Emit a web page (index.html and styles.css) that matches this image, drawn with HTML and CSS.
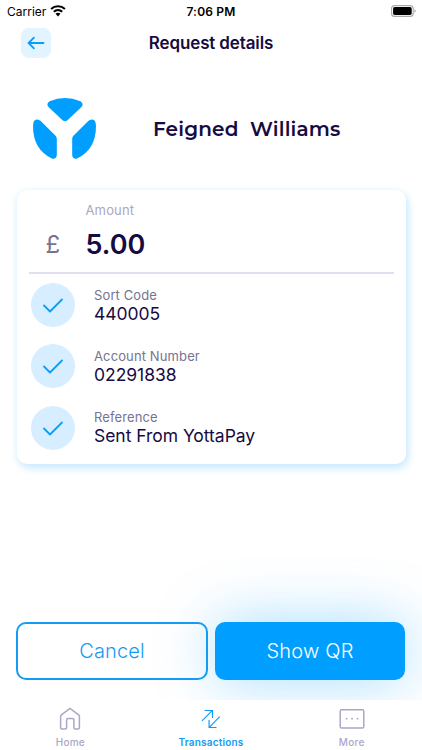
FILE: index.html
```html
<!DOCTYPE html>
<html lang="en">
<head>
<meta charset="utf-8">
<title>Request details</title>
<link rel="stylesheet" href="styles.css">
</head>
<body>
<div class="screen">
  <div class="status">
    <div class="carrier"><span class="t carrier-text">Carrier</span>
      <svg width="16" height="12" viewBox="0 0 16 12"><path d="M8 11.4 5.5 8.8a3.7 3.7 0 0 1 5 0Z"/><path d="M3.8 6.8a6.2 6.2 0 0 1 8.4 0M1.1 4a10 10 0 0 1 13.8 0" fill="none" stroke="#000" stroke-width="2.1"/></svg>
    </div>
    <span class="t clock">7:06 PM</span>
    <svg class="battery" width="25" height="12" viewBox="0 0 25 12"><rect x=".6" y=".6" width="21.6" height="10.8" rx="3" fill="#fff" stroke="#aaa" stroke-width="1.1"/><rect x="2.1" y="2.1" width="18.6" height="7.8" rx="1.6"/><path d="M23.5 4.3v3.4q1.2-.5 1.2-1.7t-1.2-1.7" fill="#999"/></svg>
  </div>
  <header class="header">
    <button class="back" aria-label="Back"><svg width="30" height="30" viewBox="0 0 30 30"><path d="M22.5 15h-15M12.9 9.7 7.6 15l5.3 5.3"/></svg></button>
    <h1 class="t title">Request details</h1>
  </header>
  <section class="payee">
    <svg class="logo" width="64" height="62" viewBox="0 0 64 62"><path d="M16.6 3.2Q32-3.1 47.4 3.2 51.5 5.9 48 9.6L35.500 21.300Q32 25 28.500 21.300L16 9.600Q12.500 5.900 16.600 3.200Z"/><path d="M7.500 22.800 22.800 38Q23.800 39 23.800 41V57Q23.300 61.500 18.900 60.500 0 51.500 0 28 .2 18.500 7.500 22.800Z"/><path d="M55.500 22.800 40.200 38Q39.200 39 39.200 41V57Q39.700 61.500 44.100 60.500 63 51.500 63 28 62.800 18.500 55.500 22.800Z"/></svg>
    <h2 class="t name">Feigned&nbsp; Williams</h2>
  </section>
  <section class="card">
    <div class="amount">
      <span class="t pound">£</span>
      <div class="amount-copy"><span class="t amount-label">Amount</span><strong class="t value">5.00</strong></div>
    </div>
    <div class="row"><span class="check"><svg width="44" height="44" viewBox="0 0 44 44"><path d="m13 22.500 6 6L31 16.500"/></svg></span><div class="copy"><span class="t label">Sort Code</span><span class="t data">440005</span></div></div>
    <div class="row"><span class="check"><svg width="44" height="44" viewBox="0 0 44 44"><path d="m13 22.500 6 6L31 16.500"/></svg></span><div class="copy"><span class="t label">Account Number</span><span class="t data">02291838</span></div></div>
    <div class="row"><span class="check"><svg width="44" height="44" viewBox="0 0 44 44"><path d="m13 22.500 6 6L31 16.500"/></svg></span><div class="copy"><span class="t label">Reference</span><span class="t data">Sent From YottaPay</span></div></div>
  </section>
  <div class="actions"><button class="cancel">Cancel</button><button class="show">Show QR</button></div>
  <nav class="tabs">
    <div class="tab"><svg width="24" height="24" viewBox="0 0 24 24"><path d="M2.600 9.400Q2.600 8.500 3.400 7.900L12 1.500l8.600 6.400q.8.600.8 1.500V20.500q0 1.500-1.500 1.500h-2.500q-1.500 0-1.500-1.500v-7.500q0-1.500-1.500-1.500H10.100q-1.500 0-1.500 1.500v7.500q0 1.500-1.500 1.500h-3q-1.500 0-1.500-1.500Z"/></svg><span>Home</span></div>
    <div class="tab active"><svg width="24" height="24" viewBox="0 0 24 24"><path d="M3 13.800 13.200 3.600M5.500 3.500h8v7.500M20.700 9.700 10.300 20.300M17.500 20.500H10.100v-7.500"/></svg><span>Transactions</span></div>
    <div class="tab more"><svg width="26" height="24" viewBox="0 0 26 24"><rect x="1.200" y="2.700" width="23.600" height="18.200" rx="1.500"/><path class="dots" d="M7.500 11.700h.1M13 11.700h.1M18.500 11.700h.1"/></svg><span>More</span></div>
  </nav>
</div>
</body>
</html>
```
FILE: styles.css
```css
* { box-sizing: border-box; }
body { margin: 0; background: #fff; font-family: Inter, "Liberation Sans", sans-serif; color: #160b42; }
button { font: inherit; padding: 0; border: 0; }
h1, h2 { margin: 0; }
svg { display: block; flex-shrink: 0; }
.t { white-space: nowrap; }
.screen { width: 422px; height: 750px; display: flex; flex-direction: column; overflow: hidden; background: #fff; }
.status { height: 22px; padding: 0 7px; display: grid; grid-template-columns: 1fr auto 1fr; align-items: center; color: #000; }
.carrier { display: flex; align-items: center; gap: 4px; font-size: 12px; }
.clock { font-size: 12px; font-weight: 600; letter-spacing: .2px; }
.battery { justify-self: end; margin-right: -1px; }
.header { height: 42px; padding: 0 21px; display: grid; grid-template-columns: 30px 1fr 30px; align-items: center; }
.back { width: 30px; height: 30px; border-radius: 8px; background: #e2f4ff; }
.back path { fill: none; stroke: #0a9dfa; stroke-width: 1.8; stroke-linecap: round; stroke-linejoin: round; }
.title { text-align: center; font-size: 17px; line-height: 22px; font-weight: 600; letter-spacing: -.13px; }
.payee { height: 126px; padding: 4px 0 0 33px; display: flex; align-items: center; gap: 56px; }
.logo { fill: #009fff; }
.name { font-family: Montserrat, Inter, sans-serif; font-size: 20px; line-height: 26px; font-weight: 600; letter-spacing: .16px; }
.card { width: 389px; height: 274px; margin-left: 16.5px; border-radius: 10px; background: #fff; box-shadow: 2px 4px 8px #c6e8ff, 0 0 7px #eef8ff; padding: 0 12px; }
.amount { height: 84px; display: flex; border-bottom: 2px solid #dfdff1; }
.pound { width: 57px; padding: 39px 0 0 17px; color: #777291; font-size: 24px; line-height: 32px; }
.amount-copy { display: flex; flex-direction: column; align-items: flex-start; padding-top: 11px; }
.amount-label { font-size: 13px; line-height: 18px; letter-spacing: .15px; color: #aaa7c0; }
.value { font-size: 27px; line-height: 32px; margin-top: 10px; font-weight: 600; }
.row { height: 61.3px; padding: 1px 0 0 2.5px; display: flex; align-items: center; gap: 19px; }
.check { width: 44px; height: 44px; border-radius: 50%; background: #d6eeff; }
.check path { fill: none; stroke: #0a9dfa; stroke-width: 1.8; stroke-linecap: round; stroke-linejoin: round; }
.copy { display: flex; flex-direction: column; align-items: flex-start; padding-bottom: 2px; }
.label { font-size: 13px; line-height: 18px; letter-spacing: .12px; color: #777291; }
.data { font-size: 17.5px; line-height: 19px; letter-spacing: -.04px; }
.actions { height: 236px; padding: 158px 16px 0; display: flex; gap: 7px; }
.actions button { height: 58px; border-radius: 10px; font-size: 20px; font-weight: 300; }
.actions .cancel { width: 192px; border: 2px solid #149cf5; color: #149cf5; background: transparent; position: relative; z-index: 1; letter-spacing: .1px; }
.actions .show { width: 190px; background: #009fff; color: #fff; box-shadow: 0 0 60px rgba(0, 159, 255, .36); letter-spacing: .2px; }
.tabs { height: 50px; background: #fff; display: grid; grid-template-columns: repeat(3, 1fr); position: relative; z-index: 2; }
.tab { display: flex; flex-direction: column; align-items: center; padding-top: 7px; color: #aaa6ca; font-size: 10px; font-weight: 500; line-height: 14px; gap: 4px; letter-spacing: .25px; }
.tab svg { fill: none; stroke: currentColor; stroke-width: 1.5; }
.tab .dots { stroke-width: 1.8; stroke-linecap: round; }
.active { color: #139bf4; font-weight: 600; letter-spacing: .2px; }
.active svg { stroke-width: 1.2; }
```
